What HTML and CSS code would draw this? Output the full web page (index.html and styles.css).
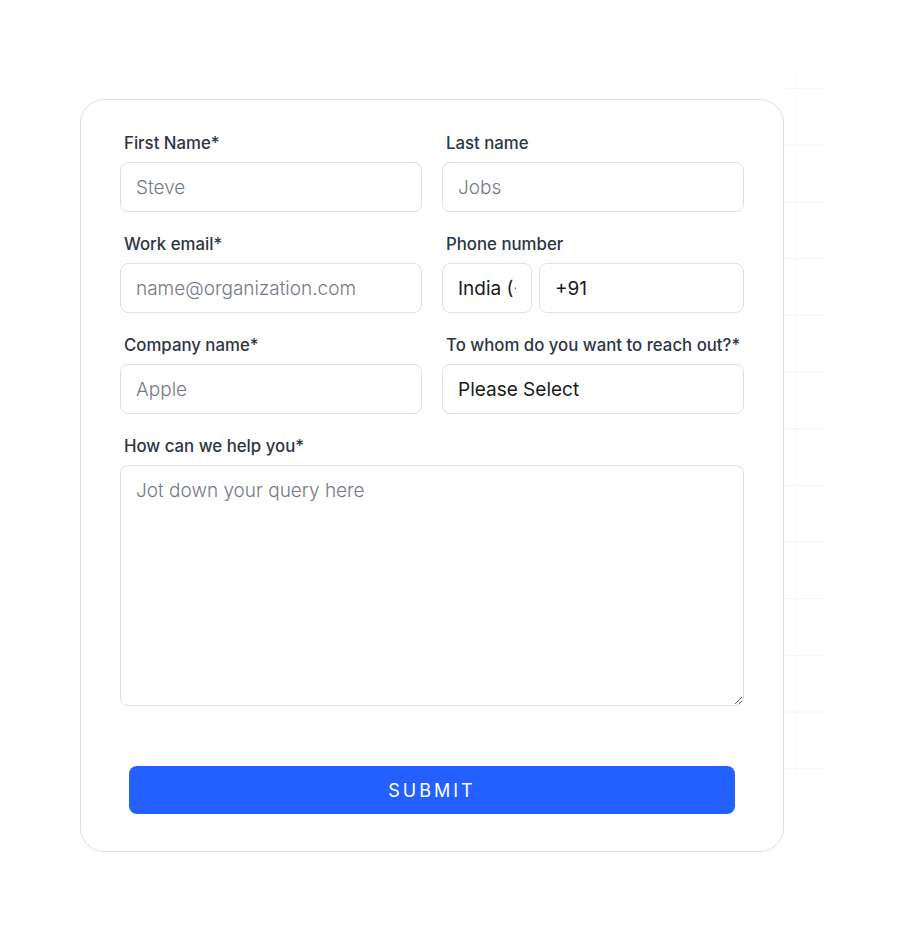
FILE: index.html
```html
<!DOCTYPE html>
<html lang="en">
<head>
<meta charset="utf-8">
<title>Contact form</title>
<link rel="stylesheet" href="styles.css">
</head>
<body>
<div class="page">
  <div class="grid-deco" aria-hidden="true"></div>
  <form class="card">
    <div class="fields">
      <div class="field">
        <label class="label" for="fn">First Name*</label>
        <input class="input" id="fn" type="text" placeholder="Steve">
      </div>
      <div class="field">
        <label class="label" for="ln">Last name</label>
        <input class="input" id="ln" type="text" placeholder="Jobs">
      </div>
      <div class="field">
        <label class="label" for="em">Work email*</label>
        <input class="input" id="em" type="email" placeholder="name@organization.com">
      </div>
      <div class="field">
        <label class="label" for="ph">Phone number</label>
        <div class="phone">
          <select class="input country" aria-label="Country">
            <option>India (+91)</option>
          </select>
          <input class="input" id="ph" type="tel" value="+91">
        </div>
      </div>
      <div class="field">
        <label class="label" for="co">Company name*</label>
        <input class="input" id="co" type="text" placeholder="Apple">
      </div>
      <div class="field">
        <label class="label" for="to">To whom do you want to reach out?*</label>
        <select class="input select" id="to">
          <option>Please Select</option>
        </select>
      </div>
      <div class="field wide">
        <label class="label" for="msg">How can we help you*</label>
        <textarea class="input textarea" id="msg" placeholder="Jot down your query here"></textarea>
      </div>
    </div>
    <button class="submit" type="button">SUBMIT</button>
  </form>
</div>
</body>
</html>
```

FILE: styles.css
```css
* { box-sizing: border-box; }

html, body {
  margin: 0;
  padding: 0;
  background: #ffffff;
  font-family: Inter, "Noto Sans", "Liberation Sans", sans-serif;
}

.page {
  position: relative;
  padding: 99px 0 77px 80px;
}

.grid-deco {
  position: absolute;
  left: 784px;
  top: 75px;
  width: 41px;
  height: 700px;
  background-image:
    linear-gradient(to bottom, #f4f4f4 1px, transparent 1px),
    linear-gradient(to right, transparent 12px, #f7f7f7 12px, #f7f7f7 13px, transparent 13px);
  background-size: 100% 56.7px, 100% 100%;
  background-position: 0 13px, 0 0;
  z-index: 0;
}

.card {
  position: relative;
  z-index: 1;
  width: 704px;
  background: #ffffff;
  border: 1px solid #dedede;
  border-radius: 24px;
  padding: 31px 39px 37px 39px;
}

.fields {
  display: grid;
  grid-template-columns: 1fr 1fr;
  column-gap: 20px;
  row-gap: 20px;
}

.field {
  display: flex;
  flex-direction: column;
  min-width: 0;
}

.field.wide {
  grid-column: 1 / 3;
}

.label {
  font-size: 16.8px;
  line-height: 24px;
  font-weight: 500;
  color: #2d3544;
  padding-left: 4px;
  margin-bottom: 7px;
}

.input {
  display: block;
  width: 100%;
  height: 50px;
  border: 1px solid #e0e0e0;
  border-radius: 8px;
  background: #ffffff;
  padding: 0 15px;
  font-family: Inter, "Noto Sans", "Liberation Sans", sans-serif;
  font-size: 19px;
  font-weight: 400;
  color: #1a1a1a;
  outline: none;
}

.input::placeholder {
  color: #737a86;
  font-weight: 300;
}

select.input {
  -webkit-appearance: none;
  appearance: none;
  color: #1a1a1a;
}

.phone {
  display: flex;
  gap: 7px;
}

.country {
  flex: 0 0 90px;
  width: 90px;
}

.textarea {
  height: 241px;
  padding: 12px 15px;
  line-height: 26px;
  resize: vertical;
}

.submit {
  display: block;
  width: calc(100% - 18px);
  margin: 60px 9px 0 9px;
  height: 48px;
  border: none;
  border-radius: 8px;
  background: #245fff;
  color: #ffffff;
  font-family: Inter, "Noto Sans", "Liberation Sans", sans-serif;
  font-size: 18px;
  font-weight: 400;
  letter-spacing: 3px;
  cursor: pointer;
}
```
